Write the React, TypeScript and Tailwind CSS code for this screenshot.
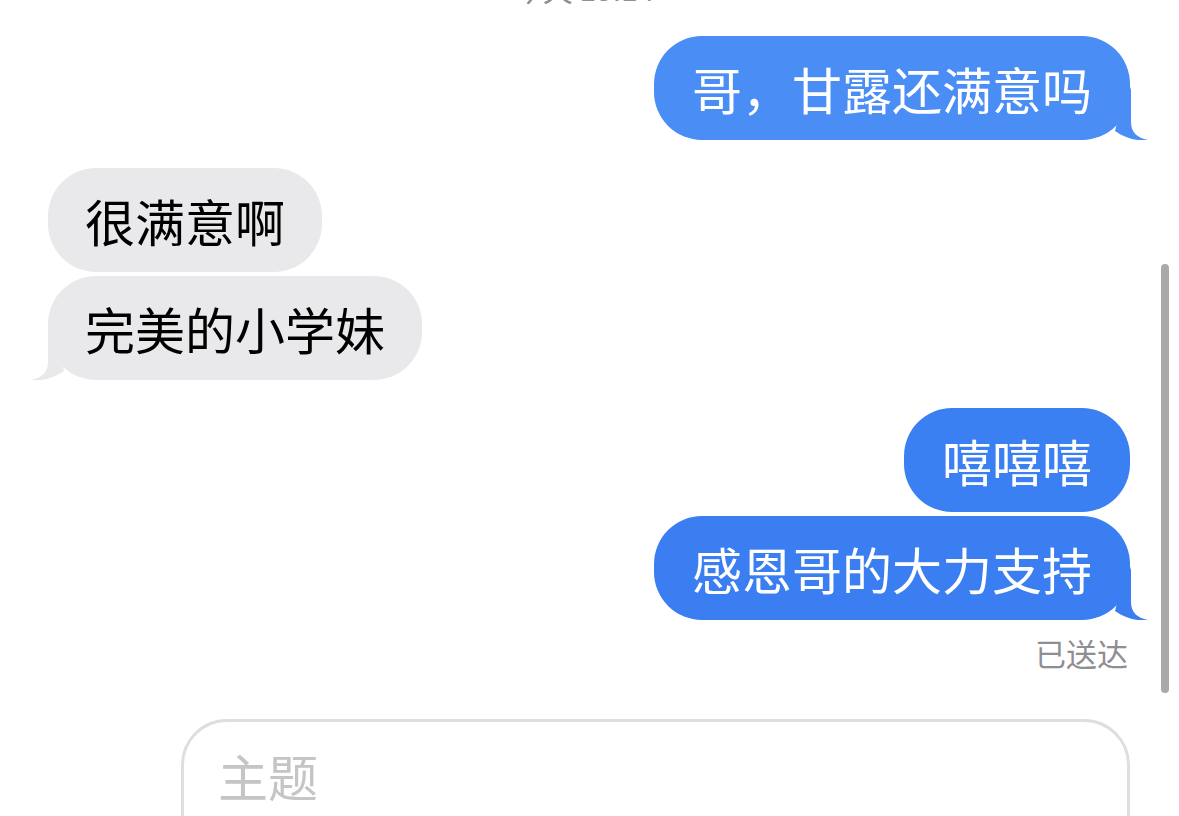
import React from 'react';

const font = { fontFamily: '"Noto Sans CJK SC", "Noto Sans", sans-serif' };

// iMessage style tail, drawn over the bubble's bottom corner
function TailRight({ color }: { color: string }) {
  return (
    <svg className="absolute -right-[18px] bottom-0" width="48" height="60" viewBox="0 0 48 60">
      <path d="M28,0 L31,10 L31,42 C31,53 38,58 48,60 C40,61.5 26,59 15,51 Z" fill={color} />
    </svg>
  );
}

function TailLeft({ color }: { color: string }) {
  return (
    <svg className="absolute -left-[17px] bottom-0" width="48" height="60" viewBox="0 0 48 60">
      <path d="M20,0 L17,10 L17,42 C17,53 10,58 0,60 C8,61.5 22,59 33,51 Z" fill={color} />
    </svg>
  );
}

function Sent({ text, color, tail }: { text: string; color: string; tail?: boolean }) {
  return (
    <div className="flex justify-end">
      <div
        className="relative h-[104px] flex items-center rounded-[48px] px-[38px] text-[50px] text-white"
        style={{ backgroundColor: color }}
      >
        {tail && <TailRight color={color} />}
        <span className="relative leading-none">{text}</span>
      </div>
    </div>
  );
}

function Received({ text, tail }: { text: string; tail?: boolean }) {
  return (
    <div className="flex justify-start">
      <div className="relative h-[104px] flex items-center rounded-[48px] px-[37px] text-[50px] text-black bg-[#e9e9eb]">
        {tail && <TailLeft color="#e9e9eb" />}
        <span className="relative leading-none">{text}</span>
      </div>
    </div>
  );
}

export default function App() {
  return (
    <div className="relative w-[1179px] h-[816px] overflow-hidden bg-white" style={font}>
      <div className="h-[6px] overflow-hidden">
        <div className="-mt-[30px] pr-[12px] text-center text-[30px] leading-[36px] text-[#8e8e93]">今天 13:14</div>
      </div>

      <div className="pl-[48px] pr-[49px] pt-[30px] flex flex-col">
        <Sent text="哥，甘露还满意吗" color="#4a8df5" tail />

        <div className="mt-[28px] flex flex-col gap-[4px]">
          <Received text="很满意啊" />
          <Received text="完美的小学妹" tail />
        </div>

        <div className="mt-[28px] flex flex-col gap-[4px]">
          <Sent text="嘻嘻嘻" color="#3b80f3" />
          <Sent text="感恩哥的大力支持" color="#3a7ef2" tail />
        </div>

        <div className="mt-[15px] pr-[2px] text-right text-[31px] leading-[36px] text-[#8e8e93]">已送达</div>
      </div>

      <div className="ml-[181px] mr-[49px] mt-[48px] h-[140px] rounded-t-[46px] border-[3px] border-[#dedede] px-[34px] pt-[23px]">
        <div className="text-[50px] leading-[60px] text-[#c5c5c7]">主题</div>
      </div>

      <div className="absolute left-[1161px] top-[264px] w-[8px] h-[429px] rounded-full bg-[#a9a9a9]" />
    </div>
  );
}
